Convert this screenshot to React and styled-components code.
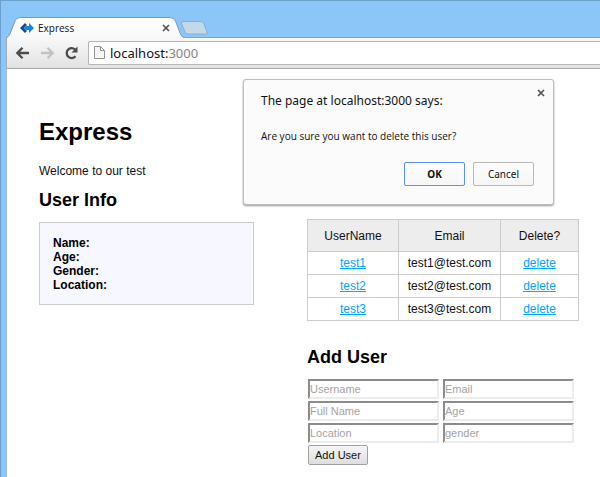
import React from "react";
import styled, { createGlobalStyle } from "styled-components";

const GlobalStyle = createGlobalStyle`
  * { box-sizing: border-box; }
  body {
    margin: 0;
    background: #8cc6f9;
    color: #111;
    font: 12px/14px "Liberation Sans", Arial, sans-serif;
  }
`;

const uiFont = `"Noto Sans", "Open Sans", sans-serif`;
const smallUiFont = `"Open Sans", "Noto Sans", sans-serif`;

const Browser = styled.div`
  min-height: 100vh;
  display: flex;
  flex-direction: column;
  padding: 16px 0 0 5px;
  border: solid #6d9fcb;
  border-width: 1px 0 0 1px;
  overflow: hidden;
`;

const TabStrip = styled.div`
  display: flex;
  align-items: flex-start;
  height: 20px;
`;

const Tab = styled.div`
  position: relative;
  z-index: 1;
  display: flex;
  align-items: center;
  gap: 4px;
  width: 178px;
  height: 21px;
  padding: 0 14px 0 14px;
  color: #111;
  font: 10px/20px ${smallUiFont};
`;

const TabShape = styled.svg`
  position: absolute;
  z-index: -1;
  inset: 0;
`;

const TabTitle = styled.span`
  flex: 1;
`;

const IconButton = styled.button`
  display: flex;
  padding: 0;
  border: 0;
  background: none;
`;

const NewTab = styled(IconButton)`
  margin: 4px 0 0 -4px;
`;

const Toolbar = styled.div`
  display: flex;
  align-items: center;
  gap: 10px;
  height: 32px;
  padding: 0 0 1px 8px;
  border: solid #a9a9a9;
  border-width: 1px 0 1px 1px;
  border-top-color: #7aa5cc;
  background: linear-gradient(#f8f8f8, #e2e2e2);
`;

const AddressBar = styled.div`
  flex: 1;
  display: flex;
  align-items: center;
  gap: 5px;
  height: 24px;
  padding-left: 5px;
  border: 1px solid #b5b5b5;
  border-right: 0;
  border-radius: 2px 0 0 2px;
  background: #fff;
  color: #111;
  font: 13px/20px ${uiFont};
`;

const Port = styled.span`
  color: #858585;
`;

const Page = styled.main`
  position: relative;
  flex: 1;
  display: flex;
  gap: 53px;
  padding: 50px 22px 10px 32px;
  border-left: 1px solid #aebdcb;
  background: #fff;
`;

const Intro = styled.section`
  flex: 0 0 215px;
`;

const Users = styled.section`
  flex: 1 0 271px;
  padding-top: 100px;
`;

const Title = styled.h1`
  margin: 0 0 19px;
  color: #000;
  font-size: 24px;
  line-height: 26px;
`;

const Heading = styled.h2`
  margin: 0 0 12px;
  color: #000;
  font-size: 18px;
  line-height: 20px;
`;

const Welcome = styled.p`
  margin: 0 0 12px;
`;

const InfoBox = styled.div`
  padding: 13px 13px 12px;
  border: 1px solid #ccc;
  background: #f7f7ff;
  color: #000;
  font-weight: bold;
`;

const Table = styled.table`
  width: 271px;
  margin-bottom: 26px;
  border-collapse: collapse;
  table-layout: fixed;
  text-align: center;
`;

const HeadCell = styled.th`
  width: ${(p) => p.$width};
  height: 32px;
  padding: 0;
  border: 1px solid #ccc;
  background: #ededed;
  font-weight: normal;
`;

const Cell = styled.td`
  height: 23px;
  padding: 0;
  border: 1px solid #ccc;
`;

const Link = styled.a`
  color: #00a6ff;
`;

const Form = styled.form`
  display: grid;
  grid-template-columns: 131px 131px;
  gap: 2px 4px;
  padding-left: 1px;
`;

const Field = styled.input`
  width: 100%;
  height: 20px;
  padding: 0;
  border: 2px solid;
  border-color: #8c8c8c #ececec #ececec #8c8c8c;
  background: #fff;
  font: 11px "Liberation Sans", Arial, sans-serif;
  &::placeholder { color: #a3a3a3; }
`;

const Submit = styled.button`
  justify-self: start;
  height: 20px;
  padding: 0 6px;
  border: 1px solid #a0a0a0;
  border-radius: 2px;
  background: linear-gradient(#f6f6f6, #dedede);
  color: #111;
  font: 11px "Liberation Sans", Arial, sans-serif;
`;

const Dialog = styled.div`
  position: absolute;
  top: 10px;
  right: 46px;
  width: 311px;
  padding: 12px 19px 18px 17px;
  border: 1px solid #bdbdbd;
  border-radius: 3px;
  background: #fbfbfb;
  box-shadow: 0 1px 2px #999;
  font-family: ${uiFont};
`;

const DialogTitle = styled.h2`
  margin: 0 0 18px;
  font-size: 12px;
  font-weight: normal;
  line-height: 18px;
`;

const Message = styled.p`
  margin: 0 0 18px;
  font: 10px/16px ${smallUiFont};
`;

const Actions = styled.div`
  display: flex;
  justify-content: flex-end;
  gap: 8px;
`;

const DialogButton = styled.button`
  width: 61px;
  height: 24px;
  padding: 0;
  border: 1px solid ${(p) => (p.$primary ? "#5d92ea" : "#b8b8b8")};
  border-radius: 2px;
  background: linear-gradient(#fdfdfd, #f6f6f6);
  color: #111;
  font-family: ${uiFont};
  font-size: 10px;
  font-weight: ${(p) => (p.$primary ? "bold" : "normal")};
`;

const DialogClose = styled(IconButton)`
  position: absolute;
  top: 9px;
  right: 8px;
`;

const Cross = () => (
  <svg width="8" height="8" viewBox="0 0 8 8" stroke="#555" strokeWidth="1.7">
    <path d="M1 1l6 6M7 1L1 7" />
  </svg>
);

const Arrow = ({ color, flip }) => (
  <svg width="15" height="14" viewBox="0 0 15 14" fill="none" stroke={color} strokeWidth="2.3">
    <path d={flip ? "M1 7h11M7.5 1.8L12.7 7l-5.2 5.2" : "M14 7H3M7.5 1.8L2.3 7l5.2 5.2"} />
  </svg>
);

const fields = ["Username", "Email", "Full Name", "Age", "Location", "gender"];
const users = ["test1", "test2", "test3"];

export default function App() {
  return (
    <>
      <GlobalStyle />
      <Browser>
        <TabStrip>
          <Tab>
            <TabShape width="178" height="21" viewBox="0 0 178 21">
              <defs>
                <linearGradient id="tabFill" x2="0" y2="1">
                  <stop stopColor="#fff" />
                  <stop offset="1" stopColor="#f8f8f8" />
                </linearGradient>
              </defs>
              <path
                d="M0 21.5Q3 19 4 17L9 4Q10.500.5 14 .5H164Q168 .5 169.500 4L174 16Q175.500 20 178 20.500V22Z"
                fill="url(#tabFill)"
                stroke="#739cc2"
              />
            </TabShape>
            <svg width="14" height="10" viewBox="0 0 14 10">
              <path d="M5 0L0 5l5 5 2-2-3-3 3-3z" fill="#124e94" />
              <path d="M9 0v3H6L4 5l2 2h3v3l5-5z" fill="#1685e3" />
            </svg>
            <TabTitle>Express</TabTitle>
            <IconButton aria-label="Close tab"><Cross /></IconButton>
          </Tab>
          <NewTab aria-label="New tab">
            <svg width="29" height="14" viewBox="0 0 29 14">
              <path
                d="M3 .5H21Q23 .5 24 3L27 11Q28 13 25.500 13H8Q6 13 5 11L1.500 2.500Q1 .5 3 .5Z"
                fill="#c5d8e8"
                stroke="#88add0"
              />
            </svg>
          </NewTab>
        </TabStrip>
        <Toolbar>
          <IconButton aria-label="Back"><Arrow color="#4b4b4b" /></IconButton>
          <IconButton aria-label="Forward"><Arrow color="#c2c2c2" flip /></IconButton>
          <IconButton aria-label="Reload">
            <svg width="13" height="14" viewBox="1 0 13 14">
              <path d="M11.500 10.300A5 5 0 1 1 11 3.300" fill="none" stroke="#4b4b4b" strokeWidth="2.300" />
              <path d="M13.500.5v6h-6z" fill="#4b4b4b" />
            </svg>
          </IconButton>
          <AddressBar>
            <svg width="11" height="13" viewBox="0 0 11 13" fill="#f7f7f7" stroke="#929292">
              <path d="M.5.5h6l4 4v8H.5zM6.500.5v4h4" />
            </svg>
            <span>localhost:<Port>3000</Port></span>
          </AddressBar>
        </Toolbar>
        <Page>
          <Intro>
            <Title>Express</Title>
            <Welcome>Welcome to our test</Welcome>
            <Heading>User Info</Heading>
            <InfoBox>
              <div>Name:</div>
              <div>Age:</div>
              <div>Gender:</div>
              <div>Location:</div>
            </InfoBox>
          </Intro>
          <Users>
            <Table>
              <thead>
                <tr>
                  <HeadCell $width="91px">UserName</HeadCell>
                  <HeadCell $width="102px">Email</HeadCell>
                  <HeadCell $width="78px">Delete?</HeadCell>
                </tr>
              </thead>
              <tbody>
                {users.map((name) => (
                  <tr key={name}>
                    <Cell><Link href="#">{name}</Link></Cell>
                    <Cell>{name}@test.com</Cell>
                    <Cell><Link href="#">delete</Link></Cell>
                  </tr>
                ))}
              </tbody>
            </Table>
            <Heading>Add User</Heading>
            <Form>
              {fields.map((name) => (
                <Field key={name} aria-label={name} placeholder={name} />
              ))}
              <Submit type="button">Add User</Submit>
            </Form>
          </Users>
          <Dialog role="dialog" aria-labelledby="dialog-title">
            <DialogTitle id="dialog-title">The page at localhost:3000 says:</DialogTitle>
            <Message>Are you sure you want to delete this user?</Message>
            <Actions>
              <DialogButton $primary>OK</DialogButton>
              <DialogButton>Cancel</DialogButton>
            </Actions>
            <DialogClose aria-label="Close dialog"><Cross /></DialogClose>
          </Dialog>
        </Page>
      </Browser>
    </>
  );
}
